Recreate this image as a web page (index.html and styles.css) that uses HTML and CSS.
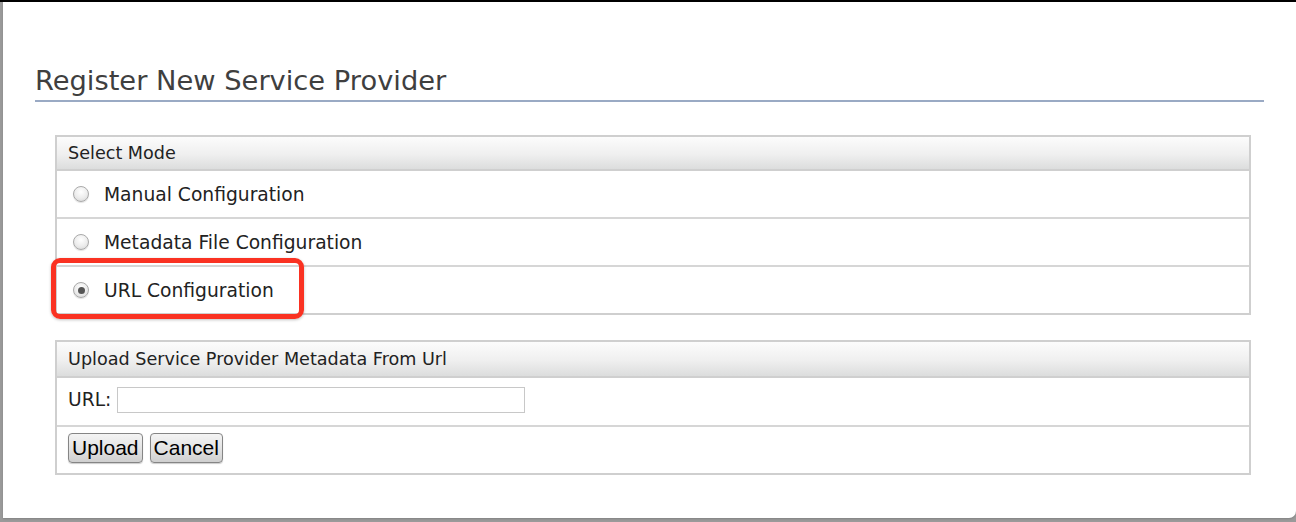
FILE: index.html
```html
<!DOCTYPE html>
<html>
<head>
<meta charset="utf-8">
<link rel="stylesheet" href="styles.css">
</head>
<body>
<div class="frame">
  <div class="panel">
    <h1 class="title">Register New Service Provider</h1>
    <div class="box">
      <div class="box-head">Select Mode</div>
      <div class="row"><span class="radio"></span><span class="label">Manual Configuration</span></div>
      <div class="row"><span class="radio"></span><span class="label">Metadata File Configuration</span></div>
      <div class="row">
        <span class="highlight"></span>
        <span class="radio checked"></span><span class="label">URL Configuration</span>
      </div>
    </div>
    <div class="box box2">
      <div class="box-head">Upload Service Provider Metadata From Url</div>
      <div class="row row-url"><span class="label">URL:</span><input class="url" type="text"></div>
      <div class="row row-btn"><button class="btn">Upload</button><button class="btn">Cancel</button></div>
    </div>
  </div>
</div>
</body>
</html>
```
FILE: styles.css
```css
html, body {
  margin: 0;
  padding: 0;
  width: 1296px;
  height: 522px;
  overflow: hidden;
  background: #b4b4b4;
}
.frame {
  border-top: 2px solid #000;
  height: 520px;
  background: #9a9a9a;
  display: flex;
  flex-direction: column;
}
.panel {
  margin-left: 3px;
  height: 516px;
  background: #fff;
  border-bottom-right-radius: 7px;
  padding: 0 32px;
  box-sizing: border-box;
  box-shadow: 0 1px 2px rgba(0,0,0,0.15);
  font-family: "DejaVu Sans", sans-serif;
  color: #222;
}
.title {
  margin: 0;
  padding-top: 61px;
  font-weight: normal;
  font-size: 27.3px;
  line-height: 35px;
  color: #3f3f3f;
  padding-bottom: 2px;
  border-bottom: 2px solid #9aaac4;
}
.box {
  margin: 33px 13px 0 20px;
  border: 2px solid #cfcfcf;
}
.box2 { margin-top: 25px; }
.box-head {
  height: 34px;
  line-height: 32px;
  padding-left: 11px;
  font-size: 17.6px;
  background: linear-gradient(to bottom, #fcfcfc 0%, #efefef 55%, #dcdddd 100%);
  border-bottom: 2px solid #cfcfcf;
  box-sizing: border-box;
}
.box2 .box-head { height: 36px; line-height: 34px; }
.row {
  position: relative;
  height: 48px;
  display: flex;
  align-items: center;
  font-size: 18.7px;
  border-top: 2px solid #d6d6d6;
  box-sizing: border-box;
}
.box-head + .row { border-top: 0; height: 46px; }
.box2 .box-head + .row { height: 47px; }
.radio {
  width: 16px;
  height: 16px;
  border-radius: 50%;
  margin-left: 16px;
  margin-right: 15px;
  box-sizing: border-box;
  border: 1px solid #a9a9a9;
  background: radial-gradient(circle at 50% 35%, #ffffff 0%, #ececec 55%, #d2d2d2 100%);
  box-shadow: 0 1px 1px rgba(0,0,0,0.12);
  display: flex;
  align-items: center;
  justify-content: center;
}
.radio.checked::after {
  content: "";
  width: 7px;
  height: 7px;
  border-radius: 50%;
  background: #555;
}
.label { color: #222; }
.highlight {
  position: absolute;
  left: -6px;
  top: -9px;
  width: 253px;
  height: 61px;
  box-sizing: border-box;
  border: 5px solid #fa3222;
  border-radius: 9px;
  box-shadow: 0 1px 3px rgba(0,0,0,0.25);
}
.row-url { padding-bottom: 4px; }
.row-url .label { margin-left: 11px; margin-right: 6px; }
.url {
  width: 408px;
  height: 26px;
  box-sizing: border-box;
  border: 1px solid #c8c8c8;
  background: #fff;
  margin: 0;
  padding: 0 3px;
}
.row-btn { padding-left: 11px; padding-bottom: 5px; gap: 7px; }
.btn {
  font-family: "Liberation Sans", Arial, sans-serif;
  font-size: 21px;
  height: 30px;
  padding: 0 3px;
  margin: 0;
  border: 1px solid #858585;
  border-radius: 4px;
  background: linear-gradient(to bottom, #f4f4f4 0%, #e4e4e4 50%, #cfcfcf 100%);
  color: #000;
  box-shadow: 0 1px 1px rgba(0,0,0,0.2);
}
```
